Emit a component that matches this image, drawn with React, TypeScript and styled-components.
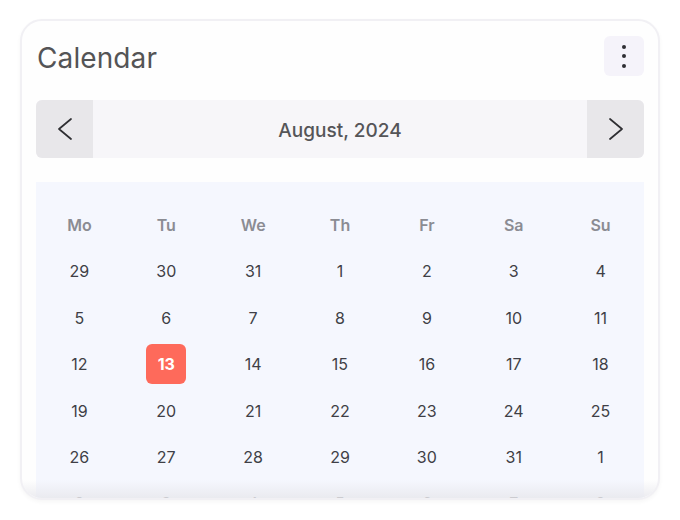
import React from "react";
import styled, { createGlobalStyle } from "styled-components";

const Global = createGlobalStyle`
  html, body { margin: 0; padding: 0; background: #ffffff; }
  body { font-family: Inter, "Noto Sans", sans-serif; }
  * { box-sizing: border-box; }
`;

const Page = styled.div`
  padding: 19px 20px;
  width: 680px;
  height: 520px;
`;

const Card = styled.div`
  position: relative;
  width: 640px;
  height: 481px;
  border: 2px solid #f1f0f4;
  border-radius: 22px;
  background: #fefefe;
  padding: 15px 14px 0;
  overflow: hidden;
  box-shadow: 0 2px 4px rgba(0, 0, 0, 0.04);
  display: flex;
  flex-direction: column;
  & > * { flex-shrink: 0; }
`;

const Header = styled.div`
  display: flex;
  align-items: center;
  justify-content: space-between;
  height: 40px;
`;

const Title = styled.h1`
  margin: 0;
  padding: 3px 0 0 1px;
  font-size: 28px;
  font-weight: 400;
  color: #545456;
  letter-spacing: 0.1px;
`;

const MoreButton = styled.button`
  width: 40px;
  height: 40px;
  border: none;
  border-radius: 6px;
  background: #f5f3fa;
  display: flex;
  flex-direction: column;
  align-items: center;
  justify-content: center;
  gap: 5.5px;
  padding: 0;
`;

const Dot = styled.span`
  width: 4px;
  height: 4px;
  border-radius: 50%;
  background: #2f2f33;
`;

const MonthBar = styled.div`
  margin-top: 24px;
  height: 58px;
  display: flex;
  border-radius: 6px;
  overflow: hidden;
  background: #f7f6f9;
`;

const NavButton = styled.button`
  width: 57px;
  border: none;
  background: #e8e7ea;
  display: flex;
  align-items: center;
  justify-content: center;
  padding: 0;
`;

const MonthLabel = styled.div`
  flex: 1;
  display: flex;
  align-items: center;
  justify-content: center;
  padding-top: 2px;
  font-size: 19px;
  font-weight: 500;
  color: #555558;
`;

const Grid = styled.div`
  margin-top: 24px;
  background: #f5f7fe;
  padding: 23px 0 20px;
  display: grid;
  grid-template-columns: repeat(7, 1fr);
  grid-auto-rows: 40px;
  row-gap: 6.4px;
  justify-items: center;
  align-items: center;
`;

const WeekDay = styled.div`
  font-size: 16px;
  font-weight: 600;
  color: #8b8c93;
  height: 40px;
  display: flex;
  align-items: center;
`;

const Day = styled.div<{ $selected?: boolean }>`
  width: 40px;
  height: 40px;
  border-radius: 6px;
  display: flex;
  align-items: center;
  justify-content: center;
  font-size: 16px;
  font-weight: ${(p) => (p.$selected ? 700 : 400)};
  color: ${(p) => (p.$selected ? "#ffffff" : "#3f3f46")};
  background: ${(p) => (p.$selected ? "#fe6a5b" : "transparent")};
`;

const BottomFade = styled.div`
  position: absolute;
  left: 0;
  right: 0;
  bottom: 0;
  height: 18px;
  background: linear-gradient(to bottom, rgba(236, 236, 241, 0), rgba(232, 232, 237, 0.85));
  pointer-events: none;
`;

const Chevron = ({ dir }: { dir: "left" | "right" }) => (
  <svg width="14" height="22" viewBox="0 0 14 22" fill="none">
    <polyline
      points={dir === "left" ? "13,1 1,11 13,21" : "1,1 13,11 1,21"}
      stroke="#2f2f33"
      strokeWidth="1.7"
      strokeLinecap="round"
      strokeLinejoin="round"
    />
  </svg>
);

const weekDays = ["Mo", "Tu", "We", "Th", "Fr", "Sa", "Su"];
const days = [
  29, 30, 31, 1, 2, 3, 4,
  5, 6, 7, 8, 9, 10, 11,
  12, 13, 14, 15, 16, 17, 18,
  19, 20, 21, 22, 23, 24, 25,
  26, 27, 28, 29, 30, 31, 1,
  2, 3, 4, 5, 6, 7, 8,
];

export default function App() {
  return (
    <>
      <Global />
      <Page>
        <Card>
          <Header>
            <Title>Calendar</Title>
            <MoreButton aria-label="More">
              <Dot />
              <Dot />
              <Dot />
            </MoreButton>
          </Header>
          <MonthBar>
            <NavButton aria-label="Previous month">
              <Chevron dir="left" />
            </NavButton>
            <MonthLabel>August, 2024</MonthLabel>
            <NavButton aria-label="Next month">
              <Chevron dir="right" />
            </NavButton>
          </MonthBar>
          <Grid>
            {weekDays.map((d) => (
              <WeekDay key={d}>{d}</WeekDay>
            ))}
            {days.map((d, i) => (
              <Day key={i} $selected={i === 15}>
                {d}
              </Day>
            ))}
          </Grid>
          <BottomFade />
        </Card>
      </Page>
    </>
  );
}
